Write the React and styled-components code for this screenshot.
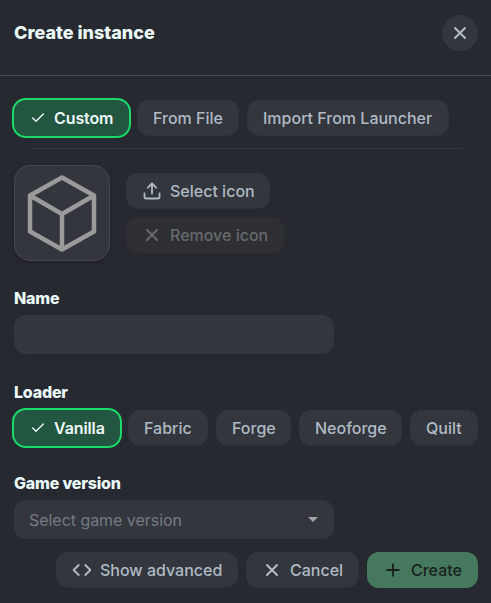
import React from 'react';
import styled, { createGlobalStyle, css } from 'styled-components';

const GlobalStyle = createGlobalStyle`
  * {
    box-sizing: border-box;
  }

  body {
    margin: 0;
    background: #26292f;
    color: #b0bac5;
    font-family: Inter, 'Liberation Sans', sans-serif;
    font-size: 16px;
    line-height: 20px;
    overflow: hidden;
  }
`;

const Modal = styled.div`
  width: 491px;
  height: 603px;
  overflow: hidden;
  background: #26292f;
`;

const Header = styled.header`
  display: flex;
  align-items: center;
  justify-content: space-between;
  height: 76px;
  padding: 0 13px 9px 14px;
  border-bottom: 1px solid #434956;
`;

const Title = styled.h1`
  margin: 0;
  color: #ecf9fb;
  font-size: 18px;
  font-weight: 800;
`;

const CloseButton = styled.button`
  display: flex;
  align-items: center;
  justify-content: center;
  width: 36px;
  height: 36px;
  padding: 0;
  border: 0;
  border-radius: 50%;
  background: #33363d;
  color: #b0bac5;
`;

const Body = styled.main`
  display: flex;
  flex-direction: column;
  padding: 24px 13px 0 14px;
`;

const Row = styled.div`
  display: flex;
  gap: 8px;
`;

const Button = styled.button`
  display: flex;
  flex: none;
  align-items: center;
  gap: 8px;
  width: ${p => p.$width}px;
  height: 36px;
  padding: 0 0 0 16px;
  border: 0;
  border-radius: 12px;
  background: #33363d;
  box-shadow: inset 0 -1px 1px rgba(17, 24, 39, 0.1);
  color: #b0bac5;
  font: inherit;
  font-weight: 500;
  white-space: nowrap;

  ${p =>
    p.$selected &&
    css`
      background: #235640;
      box-shadow: 0 0 0 2px #1bd96a;
      color: #ecf9fb;
      font-weight: 600;
      letter-spacing: -0.1px;
    `}

  ${p =>
    p.$primary &&
    css`
      background: #46785d;
      box-shadow: none;
      color: #17221f;
    `}

  ${p =>
    p.$muted &&
    css`
      background: #2e2f33;
      box-shadow: none;
      color: #67696e;
    `}
`;

const Divider = styled.hr`
  width: 432px;
  height: 1px;
  margin: 12px 0 16px 16px;
  border: 0;
  background: #34373e;
`;

const IconRow = styled.section`
  display: flex;
  align-items: center;
  gap: 16px;
`;

const Preview = styled.div`
  display: flex;
  align-items: center;
  justify-content: center;
  width: 96px;
  height: 96px;
  border: 1px solid #44474d;
  border-radius: 16px;
  background: #33363d;
  box-shadow: 0 2px 4px rgba(0, 0, 0, 0.2);
  color: #9a9a9a;
`;

const Stack = styled.div`
  display: flex;
  flex-direction: column;
  gap: 8px;
`;

const Field = styled.section`
  margin-top: ${p => p.$top}px;
`;

const Label = styled.label`
  display: block;
  margin-bottom: ${p => p.$gap || 7}px;
  color: #ecf9fb;
  font-weight: 800;
  letter-spacing: -0.2px;
`;

const TextInput = styled.input`
  display: block;
  width: 320px;
  height: 39px;
  padding: 0 15px;
  border: 0;
  border-radius: 12px;
  background: #33363d;
  color: #b0bac5;
  font: inherit;
`;

const Select = styled.div`
  display: flex;
  align-items: center;
  justify-content: space-between;
  width: 320px;
  height: 39px;
  padding: 0 16px 0 15px;
  border-radius: 12px;
  background: #33363d;
  color: #747a84;
  letter-spacing: -0.04px;
`;

const Arrow = styled.span`
  border: 5px solid transparent;
  border-top-color: #a4a4a4;
  border-bottom: 0;
`;

const Footer = styled.footer`
  display: flex;
  justify-content: flex-end;
  gap: 8px;
  margin-top: 13px;
`;

const Svg = styled.svg`
  flex: none;
  fill: none;
  stroke: currentColor;
  stroke-width: ${p => p.$stroke || 2};
  stroke-linecap: round;
  stroke-linejoin: round;
`;

const CheckIcon = () => (
  <Svg width="16" height="16" viewBox="0 0 24 24">
    <path d="M20 6L9 17l-5-5" />
  </Svg>
);

const CloseIcon = () => (
  <Svg width="20" height="20" viewBox="0 0 24 24" $stroke={2.5}>
    <path d="M18 6L6 18M6 6l12 12" />
  </Svg>
);

const UploadIcon = () => (
  <Svg width="20" height="20" viewBox="0 0 24 24" $stroke={2.2}>
    <path d="M3 15v4a2 2 0 0 0 2 2h14a2 2 0 0 0 2-2v-4M17 8l-5-5-5 5M12 3v12" />
  </Svg>
);

const CodeIcon = () => (
  <Svg width="20" height="20" viewBox="0 0 24 24" $stroke={2.2}>
    <path d="M16 18l6-6-6-6M8 6l-6 6 6 6" />
  </Svg>
);

const PlusIcon = () => (
  <Svg width="20" height="20" viewBox="0 0 24 24" $stroke={2.2}>
    <path d="M12 5v14M5 12h14" />
  </Svg>
);

const BoxIcon = () => (
  <Svg width="78" height="80" viewBox="0 0 78 80" $stroke={4.5}>
    <path d="M39 4.5L71 22.5V58.5L39 76.5L7 58.5V22.5ZM7 22.5L39 41L71 22.5M39 41V76.5" />
  </Svg>
);

const types = [
  { name: 'Custom', width: 115 },
  { name: 'From File', width: 102 },
  { name: 'Import From Launcher', width: 202 },
];

const loaders = [
  { name: 'Vanilla', width: 106 },
  { name: 'Fabric', width: 80 },
  { name: 'Forge', width: 75 },
  { name: 'Neoforge', width: 103 },
  { name: 'Quilt', width: 68 },
];

const Chips = ({ items, selected }) => (
  <Row>
    {items.map(item => (
      <Button key={item.name} $width={item.width} $selected={item.name === selected}>
        {item.name === selected && <CheckIcon />}
        {item.name}
      </Button>
    ))}
  </Row>
);

const App = () => (
  <Modal>
    <GlobalStyle />
    <Header>
      <Title>Create instance</Title>
      <CloseButton aria-label="Close">
        <CloseIcon />
      </CloseButton>
    </Header>
    <Body>
      <Chips items={types} selected="Custom" />
      <Divider />
      <IconRow>
        <Preview>
          <BoxIcon />
        </Preview>
        <Stack>
          <Button $width={144}>
            <UploadIcon />
            Select icon
          </Button>
          <Button $width={158} $muted>
            <CloseIcon />
            Remove icon
          </Button>
        </Stack>
      </IconRow>
      <Field $top={27}>
        <Label htmlFor="name">Name</Label>
        <TextInput id="name" />
      </Field>
      <Field $top={28}>
        <Label $gap={8}>Loader</Label>
        <Chips items={loaders} selected="Vanilla" />
      </Field>
      <Field $top={27}>
        <Label>Game version</Label>
        <Select>
          Select game version
          <Arrow />
        </Select>
      </Field>
      <Footer>
        <Button $width={182}>
          <CodeIcon />
          Show advanced
        </Button>
        <Button $width={113}>
          <CloseIcon />
          Cancel
        </Button>
        <Button $width={111} $primary>
          <PlusIcon />
          Create
        </Button>
      </Footer>
    </Body>
  </Modal>
);

export default App;
